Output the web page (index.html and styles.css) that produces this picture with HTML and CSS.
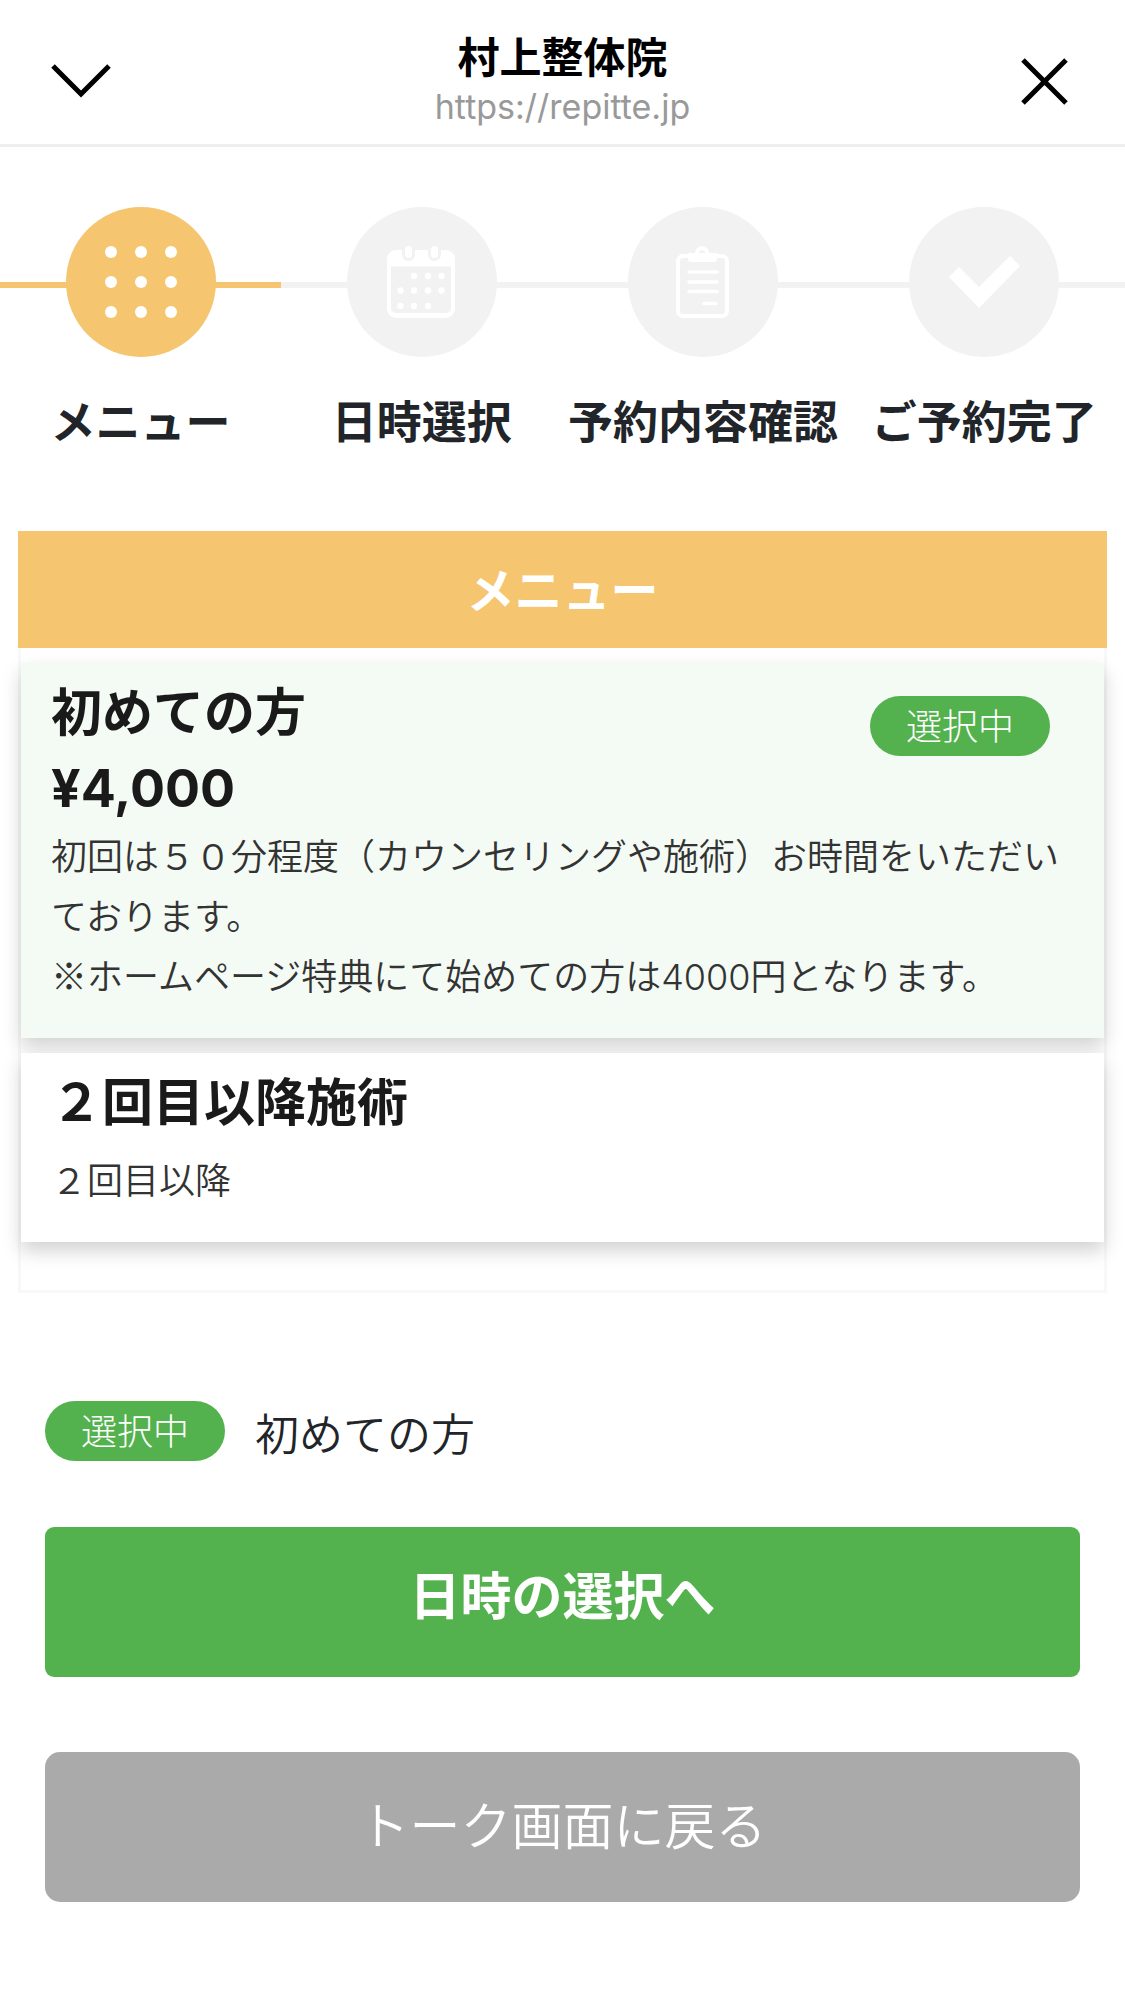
FILE: index.html
```html
<!DOCTYPE html>
<html lang="ja">
<head>
  <meta charset="UTF-8">
  <meta name="viewport" content="width=device-width, initial-scale=1.0">
  <title>村上整体院</title>
  <link rel="stylesheet" href="styles.css">
</head>
<body>

  <header class="browser-bar">
    <button type="button" class="icon-button" aria-label="最小化">
      <svg viewBox="0 0 60 60" aria-hidden="true"><path d="M2 15 L30 43 L58 15" /></svg>
    </button>
    <div class="browser-title">
      <h1>村上整体院</h1>
      <p>https://repitte.jp</p>
    </div>
    <button type="button" class="icon-button" aria-label="閉じる">
      <svg viewBox="0 0 60 60" aria-hidden="true"><path d="M9 9 L52 52 M52 9 L9 52" /></svg>
    </button>
  </header>

  <!-- 予約の進行状況 -->
  <ol class="steps">
    <li class="step active">
      <svg class="step-icon" viewBox="0 0 150 150" aria-hidden="true">
        <circle class="disc" cx="75" cy="75" r="75" />
        <g fill="#fff">
          <circle cx="45" cy="45" r="6" /><circle cx="75" cy="45" r="6" /><circle cx="105" cy="45" r="6" />
          <circle cx="45" cy="75" r="6" /><circle cx="75" cy="75" r="6" /><circle cx="105" cy="75" r="6" />
          <circle cx="45" cy="105" r="6" /><circle cx="75" cy="105" r="6" /><circle cx="105" cy="105" r="6" />
        </g>
      </svg>
      <span class="step-label">メニュー</span>
    </li>
    <li class="step">
      <svg class="step-icon" viewBox="0 0 150 150" aria-hidden="true">
        <circle class="disc" cx="75" cy="75" r="75" />
        <rect x="40" y="43" width="68" height="68" rx="9" fill="#fff" />
        <path class="disc" d="M44 59.500 H104 V101 a5 5 0 0 1 -5 5 H49 a5 5 0 0 1 -5 -5 Z" />
        <rect class="disc" x="55" y="36" width="13" height="18" rx="6.500" />
        <rect class="disc" x="81" y="36" width="13" height="18" rx="6.500" />
        <g fill="#fff">
          <rect x="58" y="39" width="7" height="12" rx="3.500" />
          <rect x="84" y="39" width="7" height="12" rx="3.500" />
          <circle cx="67" cy="69" r="3.200" /><circle cx="81" cy="69" r="3.200" /><circle cx="94.500" cy="69" r="3.200" />
          <circle cx="53.500" cy="83.500" r="3.200" /><circle cx="67" cy="83.500" r="3.200" /><circle cx="81" cy="83.500" r="3.200" /><circle cx="94.500" cy="83.500" r="3.200" />
          <circle cx="53.500" cy="99" r="3.200" /><circle cx="67" cy="99" r="3.200" /><circle cx="81" cy="99" r="3.200" />
        </g>
      </svg>
      <span class="step-label">日時選択</span>
    </li>
    <li class="step">
      <svg class="step-icon" viewBox="0 0 150 150" aria-hidden="true">
        <circle class="disc" cx="75" cy="75" r="75" />
        <g fill="none" stroke="#fff" stroke-width="4">
          <rect x="50" y="49" width="49" height="60" rx="5" />
          <path d="M69 47 v-1 a5 5 0 0 1 10 0 v1" />
          <path d="M61 65 H89 M61 75 H89 M61 84.500 H89 M76 96.500 H88" stroke-width="3.500" stroke-linecap="round" />
        </g>
        <path d="M60 46 H89 V52 a3 3 0 0 1 -3 3 H63 a3 3 0 0 1 -3 -3 Z" fill="#fff" />
      </svg>
      <span class="step-label">予約内容確認</span>
    </li>
    <li class="step">
      <svg class="step-icon" viewBox="0 0 150 150" aria-hidden="true">
        <circle class="disc" cx="75" cy="75" r="75" />
        <path d="M40 70 L50 60 L70 80 L101 49 L111 59 L70 101 Z" fill="#fff" />
      </svg>
      <span class="step-label">ご予約完了</span>
    </li>
  </ol>

  <main>
    <section class="menu">
      <h2>メニュー</h2>
      <button type="button" class="menu-card selected">
        <span class="menu-head">
          <span class="menu-heading">
            <span class="menu-name">初めての方</span>
            <span class="menu-price">¥4,000</span>
          </span>
          <span class="badge">選択中</span>
        </span>
        <span class="menu-text">初回は５０分程度（カウンセリングや施術）お時間をいただいております。<br><span class="note-mark">※</span>ホームページ特典にて始めての方は4000円となります。</span>
      </button>
      <button type="button" class="menu-card">
        <span class="menu-head">
          <span class="menu-name">２回目以降施術</span>
        </span>
        <span class="menu-text">２回目以降</span>
      </button>
    </section>

    <section class="actions">
      <p class="current">
        <span class="badge">選択中</span>
        <span class="current-name">初めての方</span>
      </p>
      <button type="button" class="next-button">日時の選択へ</button>
      <button type="button" class="back-button">トーク画面に戻る</button>
    </section>
  </main>

</body>
</html>
```
FILE: styles.css
```css
* {
  margin: 0;
  padding: 0;
  box-sizing: border-box;
}

body {
  font-family: Inter, "Noto Sans CJK JP", sans-serif;
  background-color: #fff;
  color: #212529;
}

button {
  font-family: inherit;
  border: none;
  cursor: pointer;
}

/* 上部バー */
.browser-bar {
  display: flex;
  align-items: center;
  justify-content: space-between;
  height: 147px;
  padding: 18px 51px 0;
  border-bottom: 3px solid #eee;
}

.icon-button {
  width: 60px;
  height: 60px;
  background: none;
}

.icon-button svg {
  display: block;
  fill: none;
  stroke: #000;
  stroke-width: 5;
}

.browser-title {
  text-align: center;
}

.browser-title h1 {
  font-size: 42px;
  line-height: 52px;
  color: #000;
}

.browser-title p {
  font-size: 34px;
  line-height: 46px;
  color: #999;
}

/* ステップ */
.steps {
  display: grid;
  grid-template-columns: repeat(4, 1fr);
  padding-top: 60px;
  list-style: none;
}

.step {
  display: flex;
  flex-direction: column;
  align-items: center;
  gap: 33px;
  background: linear-gradient(#f2f2f2, #f2f2f2) 0 75px / 100% 6px no-repeat;
}

.step.active {
  background-image: linear-gradient(#f5c56f, #f5c56f);
}

.step-icon {
  width: 150px;
  height: 150px;
}

.disc {
  fill: #f2f2f2;
}

.active .disc {
  fill: #f5c56f;
}

.step-label {
  font-size: 45px;
  line-height: 66px;
  font-weight: bold;
  white-space: nowrap;
}

/* メニュー */
.menu {
  margin: 75px 18px 0;
  padding-bottom: 48px;
  border: 3px solid #f8f8f8;
  border-top: none;
}

.menu h2 {
  margin: 0 -3px;
  padding-top: 3px;
  background-color: #f5c56f;
  color: #fff;
  font-size: 48px;
  line-height: 114px;
  text-align: center;
}

.menu-card {
  display: block;
  width: 100%;
  margin-top: 15px;
  padding: 12px 30px 31px;
  background-color: #fff;
  box-shadow: 0 9px 18px rgba(0, 0, 0, 0.18);
  text-align: left;
  color: #1a1a1a;
}

.menu-card.selected {
  background-color: #f4fbf5;
}

.menu-head {
  display: flex;
  align-items: flex-start;
  justify-content: space-between;
  padding-bottom: 10px;
}

.selected .menu-head {
  padding-bottom: 0;
}

.menu-name,
.menu-price {
  display: block;
  font-size: 51px;
  line-height: 76px;
  font-weight: bold;
}

.menu-price {
  font-size: 52px;
}

.menu-head .badge {
  margin: 21px 24px 0 0;
}

.menu-text {
  display: block;
  font-size: 36px;
  line-height: 60px;
  font-weight: 350;
  color: #333;
}

/* Interの※は小さいので和文フォントで表示 */
.note-mark {
  font-family: "Noto Sans CJK JP", sans-serif;
  line-height: 1;
}

.badge {
  padding: 3px 36px 0;
  border-radius: 30px;
  background-color: #53b24e;
  color: #fff;
  font-size: 36px;
  line-height: 57px;
  font-weight: 300;
}

/* 下部ボタン */
.actions {
  display: flex;
  flex-direction: column;
  padding: 108px 45px 98px;
}

.current {
  display: flex;
  align-items: flex-start;
  gap: 30px;
}

.current-name {
  font-size: 44px;
  line-height: 69px;
  font-weight: 350;
}

.next-button,
.back-button {
  height: 150px;
  color: #fff;
  font-size: 51px;
}

.next-button {
  margin-top: 57px;
  padding-bottom: 18px;
  border-radius: 9px;
  background-color: #53b24e;
  font-weight: bold;
}

.back-button {
  margin-top: 75px;
  padding-bottom: 9px;
  border-radius: 15px;
  background-color: #aaa;
  font-weight: 350;
}
```
